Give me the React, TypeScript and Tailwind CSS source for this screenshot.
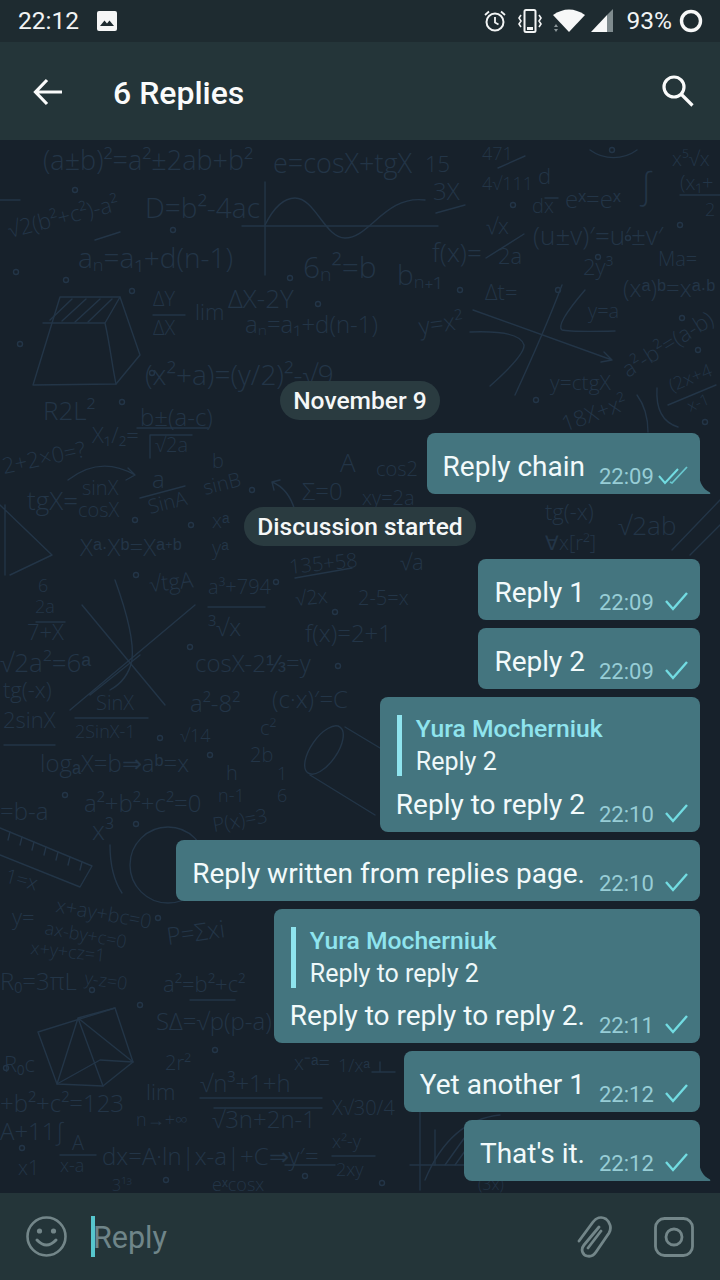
const doodleText: [string, number, number, number, number?][] = [
  ['(a±b)²=a²±2ab+b²', 43, 170, 27],
  ['e=cosX+tgX', 273, 173, 27],
  ['15', 425, 172, 22],
  ['3X', 433, 200, 24],
  ['471', 482, 160, 18],
  ['4√111', 482, 190, 18],
  ['d', 538, 184, 22],
  ['dx', 532, 213, 20],
  ['eˣ=eˣ', 565, 208, 24],
  ['∫', 640, 198, 36],
  ['x⁵√x', 672, 166, 20],
  ['(x₁+', 680, 190, 20],
  ['2', 705, 216, 18],
  ['D=b²-4ac', 145, 218, 28],
  ['√2(b²+c²)-a²', 10, 238, 22, -14],
  ['aₙ=a₁+d(n-1)', 78, 268, 28],
  ['6ₙ²=b', 303, 278, 30],
  ['(u±v)′=u′±v′', 533, 245, 26],
  ['f(x)=', 432, 262, 26],
  ['√x', 486, 234, 22],
  ['2a', 498, 264, 22],
  ['2y³', 583, 275, 22],
  ['Ma=', 658, 266, 20],
  ['bₙ₊₁', 397, 285, 28],
  ['Δt=', 485, 300, 22],
  ['ΔY', 153, 306, 20],
  ['ΔX', 153, 335, 20],
  ['lim', 195, 320, 22],
  ['ΔX-2Y', 228, 308, 26],
  ['aₙ=a₁+d(n-1)', 245, 333, 24],
  ['y=x²', 420, 335, 24, -8],
  ['(xᵃ)ᵇ=xᵃ·ᵇ', 623, 297, 24],
  ['y=a', 588, 318, 20],
  ['a²-b²=(a-b)', 628, 378, 22, -32],
  ['(x²+a)=(y/2)²-√9', 145, 385, 28],
  ['y=ctgX', 550, 390, 21],
  ['18X+x²', 565, 432, 22, -20],
  ['(2x+4', 672, 392, 18, -22],
  ['x-1', 690, 412, 16, -22],
  ['R2L²', 43, 420, 26],
  ['b±(a-c)', 140, 426, 24],
  ['X₁/₂=', 92, 443, 22],
  ['√2a', 155, 452, 20],
  ['2+2×0=?', 4, 474, 22, -12],
  ['tgX=', 27, 510, 26],
  ['sinX', 82, 495, 20],
  ['cosX', 78, 517, 20],
  ['a', 152, 488, 24],
  ['SinA', 150, 514, 20, -14],
  ['b', 212, 468, 20],
  ['sinB', 205, 495, 20, -14],
  ['Σ=0', 302, 500, 24],
  ['xᵃ', 212, 528, 20],
  ['yᵃ', 212, 555, 20],
  ['Xᵃ·Xᵇ=Xᵃ⁺ᵇ', 80, 556, 24],
  ['A', 340, 472, 26],
  ['cos2', 376, 476, 20],
  ['xy=2a', 362, 505, 20],
  ['tg(-x)', 545, 520, 22],
  ['∀x[r²]', 545, 550, 20],
  ['√2ab', 618, 535, 26],
  ['135+58', 290, 574, 20, -6],
  ['√2x', 296, 606, 20, -6],
  ['6', 38, 592, 18],
  ['2a', 35, 613, 18],
  ['7+X', 27, 640, 22],
  ['√tgA', 150, 592, 22, -6],
  ['a³+794', 208, 594, 20],
  ['³√x', 208, 636, 24],
  ['f(x)=2+1', 305, 642, 24],
  ['2-5=x', 358, 605, 20],
  ['√a', 400, 570, 22],
  ['√2a²=6ᵃ', 0, 672, 26],
  ['cosX-2⅓=y', 195, 672, 24],
  ['tg(-x)', 3, 698, 22],
  ['SinX', 96, 710, 20],
  ['a²-8²', 190, 712, 24],
  ['(c·x)′=C', 272, 708, 24],
  ['2sinX', 3, 728, 22],
  ['2SinX-1', 75, 738, 18],
  ['√14', 180, 742, 18],
  ['logₐX=b⇒aᵇ=x', 40, 772, 24],
  ['h', 226, 780, 20],
  ['n-1', 218, 802, 18],
  ['1', 277, 780, 18],
  ['6', 277, 802, 18],
  ['c²', 260, 735, 20],
  ['2b', 250, 762, 20],
  ['a²+b²+c²=0', 84, 812, 24],
  ['=b-a', 0, 820, 24],
  ['P(x)=3', 214, 832, 20, -10],
  ['x³', 92, 840, 26],
  ['1=x', 4, 882, 20, 15],
  ['x+ay+bc=0', 55, 912, 20, 10],
  ['y=', 12, 925, 22],
  ['ax-by+c=0', 44, 934, 18, 10],
  ['x+y+cz=1', 30, 954, 18, 6],
  ['P=Σxi', 168, 945, 24, -8],
  ['R₀=3πL', 0, 990, 24],
  ['a²=b²+c²', 163, 992, 22],
  ['y-z=0', 84, 984, 18, 8],
  ['SΔ=√p(p-a)', 156, 1030, 24],
  ['2r²', 165, 1070, 20],
  ['x⁻ᵃ=', 294, 1070, 20],
  ['1/xᵃ', 338, 1072, 18],
  ['lim', 146, 1100, 22],
  ['n→+∞', 136, 1126, 18],
  ['√n³+1+h', 200, 1092, 24],
  ['√3n+2n-1', 212, 1128, 24],
  ['X√30/4', 332, 1115, 20],
  ['+b²+c²=123', 0, 1112, 24],
  ['R₀c', 4, 1072, 22],
  ['A+11∫', 0, 1140, 24],
  ['A', 72, 1150, 20],
  ['x-a', 60, 1172, 18],
  ['dx=A·ln|x-a|+C⇒y′=', 102, 1165, 24],
  ['x²-y', 332, 1148, 18],
  ['2xy', 336, 1176, 18],
  ['x1', 18, 1175, 20],
  ['3¹³', 112, 1191, 16],
  ['eˣcosx', 212, 1191, 18],
  ['(3x)', 478, 1190, 16],
]

const doodleLines = [
  'M95 240 L120 232',
  'M242 226 H438',
  'M265 182 V275',
  'M265 225 C275 205 285 198 295 198 C315 198 325 238 345 238 C370 238 385 195 425 200',
  'M153 315 H185',
  'M33 385 L60 297 H120 L140 355 L116 384 Z',
  'M43 323 H105 L120 297 M105 323 C110 345 112 365 116 384',
  'M50 320 L72 299 M62 321 L86 299 M75 322 L100 299 M88 322 L112 299',
  'M137 428 H208 M150 458 V435 H192',
  'M470 332 Q520 330 524 345 Q525 355 490 386',
  'M515 395 Q545 330 562 285',
  'M585 290 Q555 325 562 330 Q570 332 615 331',
  'M473 310 L612 360 M604 352 L612 360 L601 362',
  'M436 213 L465 205 M498 168 L525 156',
  'M590 150 A40 40 0 0 0 637 150',
  'M545 198 H558 M680 195 H720',
  'M486 258 L524 234',
  'M657 388 Q655 420 678 427 M637 395 Q648 410 648 432 M668 405 L716 385',
  'M272 482 Q292 490 297 520 M272 482 L280 480 M272 482 L274 490',
  'M68 480 Q100 455 135 475 M135 475 L128 468 M135 475 L126 480',
  'M140 498 L185 486',
  'M0 505 L52 555 L10 575 M5 505 V575',
  'M115 580 Q135 635 132 660 Q128 680 110 690',
  'M82 605 L165 705 M70 710 L195 605 M90 695 L140 655',
  'M208 607 H265 M295 578 L352 568',
  'M36 622 H65 M4 745 H55 M75 718 H148',
  'M0 828 L92 866 L80 887 L0 855',
  'M10 832 L8 840 M22 837 L20 845 M34 842 L32 850 M46 847 L44 855 M58 852 L56 860 M70 857 L68 865 M82 862 L80 870',
  'M110 845 Q110 875 122 893',
  'M345 727 L400 760 M310 775 L375 815',
  'M38 1032 L115 1008 L133 1062 L103 1086 L57 1084 Z',
  'M57 1084 L78 1018 L133 1062 M78 1018 L103 1086 M115 1008 L78 1018 M57 1084 L100 1060 L133 1062',
  'M200 1098 H322 M214 1108 H322',
  'M60 1155 H96 M332 1156 H375',
  'M190 1000 H235 M380 1062 V1072 M372 1072 H395',
  'M285 1165 H335 M420 1105 V1190',
  'M425 1180 Q450 1120 500 1115 M410 1165 H500',
  'M435 1165 V1130 M445 1165 L470 1130 M455 1165 L480 1130 M465 1165 L488 1125',
  'M672 550 L720 500 M690 555 L720 525',
  'M0 200 H20',
]

const doodleDots: [number, number][] = [
  [75, 190], [173, 230], [16, 272], [66, 280], [132, 291], [290, 278], [318, 304], [152, 373], [20, 344],
  [122, 402], [612, 150], [513, 205], [628, 238], [680, 225], [460, 290], [558, 290], [598, 257], [682, 318],
  [698, 350], [536, 400], [705, 422], [135, 520], [191, 525], [252, 490], [136, 575], [276, 582], [335, 612],
  [190, 647], [338, 666], [160, 738], [210, 755], [136, 824], [65, 795], [158, 918], [92, 990],
  [215, 1050], [140, 1005], [166, 1180], [305, 1176], [382, 1183], [6, 1068], [22, 1148],
]

function MathDoodles() {
  return (
    <svg
      className="absolute inset-0 h-full w-full"
      viewBox="0 140 720 1053"
      fill="none"
      stroke="#233547"
      strokeWidth="1.4"
      strokeLinecap="round"
      strokeLinejoin="round"
    >
      {doodleLines.map((d) => (
        <path key={d} d={d} />
      ))}
      {doodleDots.map(([cx, cy]) => (
        <circle key={`${cx}-${cy}`} cx={cx} cy={cy} r="2.5" />
      ))}
      <circle cx="168" cy="865" r="38" />
      <ellipse cx="324" cy="750" rx="13" ry="28" transform="rotate(35 324 750)" />
      <g stroke="none" fill="#233547" fontFamily="'Open Sans', sans-serif" fontWeight="300">
        {doodleText.map(([t, x, y, size, rot]) => (
          <text key={`${t}-${x}-${y}`} x={x} y={y} fontSize={size} transform={rot ? `rotate(${rot} ${x} ${y})` : undefined}>
            {t}
          </text>
        ))}
      </g>
    </svg>
  )
}

function Check({ double }: { double?: boolean }) {
  return (
    <svg width="36" height="24" viewBox="0 0 36 24" fill="none" stroke="#72dce2" strokeWidth="2.4" className="block shrink-0">
      {double ? (
        <>
          <path d="M4 12 L10 19 L23 5" strokeWidth="2" />
          <path d="M15 18 L17 19 L32 3" strokeWidth="1.8" opacity="0.8" />
        </>
      ) : (
        <path d="M11 11 L18 19 L32 3" />
      )}
    </svg>
  )
}

function Bubble({
  text,
  time,
  double,
  tail,
  quote,
}: {
  text: string
  time: string
  double?: boolean
  tail?: boolean
  quote?: string
}) {
  return (
    <div className={`relative rounded-lg bg-[#44757f] pb-[6px] pl-[16px] pr-[9px] pt-[18px] ${tail ? 'rounded-br-none' : ''}`}>
      {quote && (
        <div className="mb-[12.5px] ml-[1px] flex h-[61px] flex-col justify-between border-l-[5px] border-[#8fe4ee] pl-[14px]">
          <span className="-mt-[1px] text-[24.7px] font-medium leading-[30px] text-[#8fe4ee]">Yura Mocherniuk</span>
          <span className="-mb-[1px] text-[25px] leading-[30px] text-[#eef8f9]">{quote}</span>
        </div>
      )}
      <div className="flex items-end">
        <span className="mb-[5px] mr-[14px] text-[28px] leading-[32px] text-[#f2fafb]">{text}</span>
        <span className="-mb-[2px] w-[52px] text-[22px] leading-[26px] text-[#97cdd6]">{time}</span>
        <span className="ml-[4px]">
          <Check double={double} />
        </span>
      </div>
      {tail && (
        <svg className="absolute -right-[11px] bottom-0" width="12" height="20" viewBox="0 0 12 20" fill="#44757f">
          <path d="M0 0 C0.5 9 4 15 11 18.5 Q12 20 10 20 L0 20 Z" />
        </svg>
      )}
    </div>
  )
}

function Pill({ children }: { children: string }) {
  return (
    <div className="my-[5px] self-center rounded-full bg-[#2a3b40] px-[13px] text-[24.6px] font-medium leading-[39px] text-[#f5f7f7]">
      {children}
    </div>
  )
}

function StatusBar() {
  return (
    <div className="flex h-[42px] shrink-0 items-center bg-[#1e2b30] pl-[18px] pr-[17px] text-[24.5px] text-[#f2f4f4]">
      <span className="leading-none">22:12</span>
      <svg className="ml-[18px]" width="20" height="20" viewBox="0 0 20 20">
        <rect width="20" height="20" rx="2" fill="#f5f6f6" />
        <path d="M3 15 L7.5 9.5 L10 12.5 L12.5 9.5 L17 15 Z" fill="#1e2b30" />
      </svg>
      <div className="flex-1" />
      <svg width="24" height="24" viewBox="0 0 24 24" fill="none" stroke="#f2f4f4" strokeWidth="2">
        <circle cx="12" cy="13" r="8.5" />
        <path d="M12 8 V13.5 L15.5 15.5 M2 6 L6 2.5 M22 6 L18 2.5" strokeWidth="1.8" />
      </svg>
      <svg className="ml-[10px]" width="26" height="26" viewBox="0 0 26 26" fill="none" stroke="#f2f4f4" strokeWidth="1.6">
        <rect x="7.5" y="2" width="11" height="22" rx="1.5" strokeWidth="2" />
        <rect x="10" y="19" width="6" height="3" fill="#f2f4f4" stroke="none" />
        <path d="M4 7 L2 10 L4 13 L2 16 L4 19 M22 7 L24 10 L22 13 L24 16 L22 19" />
      </svg>
      <svg className="ml-[9px]" width="34" height="24" viewBox="0 0 34 24">
        <path d="M1 6 Q17 -5 33 6 L17 23 Z" fill="#f7f8f8" />
        <path d="M2 18 L4 15 L6 18 Z M2 20 L4 23 L6 20 Z" fill="#8a9598" />
      </svg>
      <svg className="ml-[5px]" width="24" height="24" viewBox="0 0 24 24">
        <path d="M0 23 L16 6 V23 Z" fill="#f7f8f8" />
        <path d="M16 6 L22 0 V23 H16 Z" fill="#7f8b8e" />
      </svg>
      <span className="ml-[12px] leading-none">93%</span>
      <svg className="ml-[7px]" width="24" height="24" viewBox="0 0 24 24" fill="none" stroke="#f7f8f8" strokeWidth="3.4">
        <circle cx="12" cy="12" r="9.5" />
      </svg>
    </div>
  )
}

function Header() {
  return (
    <div className="flex h-[98px] shrink-0 items-center bg-[#243539] pl-[33px] pr-[26px]">
      <svg className="mt-[2px]" width="30" height="28" viewBox="0 0 30 28" fill="none" stroke="#fafbfb" strokeWidth="3.2">
        <path d="M29 14 H3 M14 2 L2.5 14 L14 26" />
      </svg>
      <span className="ml-[50px] mt-[3px] text-[32px] font-medium leading-none text-[#fafbfb]">6 Replies</span>
      <div className="flex-1" />
      <svg width="32" height="32" viewBox="0 0 32 32" fill="none" stroke="#fafbfb" strokeWidth="3.2">
        <circle cx="12" cy="12" r="10" />
        <path d="M19.5 19.5 L30.5 30.5" />
      </svg>
    </div>
  )
}

function Composer() {
  return (
    <div className="flex h-[87px] shrink-0 items-center bg-[#243539] pl-[26px] pr-[26px]">
      <svg width="41" height="41" viewBox="0 0 41 41" fill="none" stroke="#738689" strokeWidth="2.6">
        <circle cx="20.5" cy="20.5" r="19" />
        <path d="M11 24 Q20.5 34 30 24" strokeWidth="3" strokeLinecap="round" />
        <circle cx="13.5" cy="15" r="2.6" fill="#738689" stroke="none" />
        <circle cx="27.5" cy="15" r="2.6" fill="#738689" stroke="none" />
      </svg>
      <div className="ml-[24px] h-[41px] w-[4px] bg-[#56c6cd]" />
      <span className="-ml-[2px] mt-[3px] text-[30.5px] leading-none text-[#6f8589]">Reply</span>
      <div className="flex-1" />
      <svg width="38" height="42" viewBox="0 0 38 42" fill="none" stroke="#738689" strokeWidth="2.8" strokeLinecap="round">
        <path d="M24 11 L9 29 C5 34 8 39 12 40 C16 41 19 39 21 36 L34 17 C37 12 35 6 31 3 C26 0 21 2 18 6 L4 25 M26 15 L13 32" />
      </svg>
      <svg className="ml-[41px]" width="40" height="40" viewBox="0 0 40 40" fill="none" stroke="#738689" strokeWidth="2.8">
        <rect x="1.5" y="1.5" width="37" height="37" rx="9" />
        <circle cx="20" cy="20" r="8" />
      </svg>
    </div>
  )
}

export default function App() {
  return (
    <div className="flex h-[1280px] w-[720px] flex-col overflow-hidden bg-[#17212b] font-['Roboto',sans-serif]">
      <StatusBar />
      <Header />
      <div className="relative flex min-h-0 flex-1 flex-col items-end justify-end gap-2 px-[20px] pb-[12px]">
        <MathDoodles />
        <div className="relative flex w-full flex-col items-end gap-2">
          <Pill>November 9</Pill>
          <Bubble text="Reply chain" time="22:09" double tail />
          <Pill>Discussion started</Pill>
          <Bubble text="Reply 1" time="22:09" />
          <Bubble text="Reply 2" time="22:09" />
          <Bubble text="Reply to reply 2" time="22:10" quote="Reply 2" />
          <Bubble text="Reply written from replies page." time="22:10" />
          <Bubble text="Reply to reply to reply 2." time="22:11" quote="Reply to reply 2" />
          <Bubble text="Yet another 1" time="22:12" />
          <Bubble text="That's it." time="22:12" tail />
        </div>
      </div>
      <Composer />
    </div>
  )
}
